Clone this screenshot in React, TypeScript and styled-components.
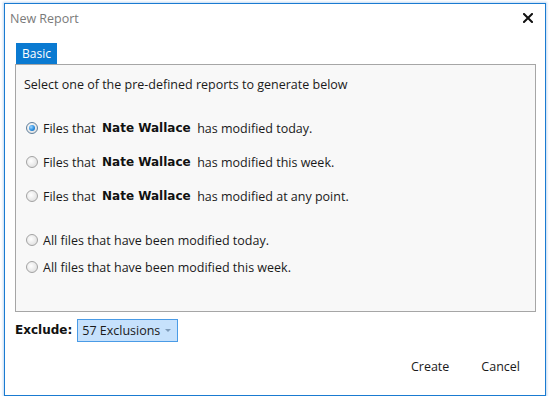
import React from "react";
import styled, { createGlobalStyle } from "styled-components";

const Global = createGlobalStyle`
  html, body { margin: 0; padding: 0; background: #ffffff; }
  body { font-family: "Open Sans", "Noto Sans", sans-serif; }
`;

const Window = styled.div`
  box-sizing: border-box;
  margin: 3px 0 0 4px;
  width: 542px;
  height: 393px;
  border: 1px solid #1a7bd1;
  box-shadow: 0 0 2px 1px rgba(80, 150, 220, 0.35);
  background: #ffffff;
  display: flex;
  flex-direction: column;
`;

const TitleBar = styled.div`
  box-sizing: border-box;
  height: 34px;
  display: flex;
  align-items: center;
  justify-content: space-between;
  padding: 0 10px 6px 5px;
  flex-shrink: 0;
`;

const Title = styled.span`
  font-size: 12.5px;
  color: #7a7a7a;
`;

const Close = styled.button`
  border: none;
  background: none;
  padding: 0;
  width: 14px;
  height: 14px;
  display: flex;
  align-items: center;
  justify-content: center;
  cursor: pointer;
`;

const Body = styled.div`
  padding: 5px 9px 0 10px;
  display: flex;
  flex-direction: column;
`;

const TabStrip = styled.div`
  display: flex;
  padding-left: 1px;
`;

const Tab = styled.div`
  background: #0a7ad1;
  color: #ffffff;
  font-size: 12px;
  height: 21px;
  padding: 0 6px;
  display: flex;
  align-items: center;
`;

const Panel = styled.div`
  box-sizing: border-box;
  height: 248px;
  border: 1px solid #a6a6a6;
  background: #f8f8f8;
  padding: 9px 8px 0 8px;
  display: flex;
  flex-direction: column;
`;

const Intro = styled.div`
  font-size: 12.5px;
  color: #1a1a1a;
  height: 20px;
  display: flex;
  align-items: center;
  margin-bottom: 24px;
`;

const Row = styled.label<{ $gap: number }>`
  display: flex;
  align-items: center;
  height: 20px;
  margin-bottom: ${(p) => p.$gap}px;
  font-size: 12.5px;
  color: #1a1a1a;
  white-space: pre;
  cursor: default;
`;

const RadioDot = styled.span<{ $on?: boolean }>`
  box-sizing: border-box;
  width: 12px;
  height: 12px;
  border-radius: 50%;
  margin: 0 5px 0 2px;
  border: 1px solid ${(p) => (p.$on ? "#5f7f9c" : "#a3a3a3")};
  background: radial-gradient(circle at 40% 40%, #ffffff 0%, #e4e4e4 70%, #d0d0d0 100%);
  display: flex;
  align-items: center;
  justify-content: center;
  &::after {
    content: "";
    display: ${(p) => (p.$on ? "block" : "none")};
    width: 6px;
    height: 6px;
    border-radius: 50%;
    background: radial-gradient(circle at 35% 35%, #9fd6ff 0%, #2a8ee0 55%, #0f5ea8 100%);
  }
`;

const Name = styled.b`
  font-family: "DejaVu Sans", sans-serif;
  font-size: 12px;
  font-weight: bold;
  color: #111;
`;

const ExcludeRow = styled.div`
  display: flex;
  align-items: center;
  margin-top: 6px;
  height: 24px;
`;

const ExcludeLabel = styled.span`
  font-family: "DejaVu Sans", sans-serif;
  font-weight: bold;
  font-size: 12px;
  color: #111;
  margin-right: 5px;
`;

const Dropdown = styled.button`
  box-sizing: border-box;
  height: 23px;
  width: 101px;
  border: 1px solid #4a9be6;
  background: #c6e1fc;
  font-family: "Open Sans", "Noto Sans", sans-serif;
  font-size: 12.5px;
  color: #1a1a1a;
  display: flex;
  align-items: center;
  gap: 5px;
  padding: 0 4px;
`;

const Caret = styled.span`
  width: 0;
  height: 0;
  border-left: 3px solid transparent;
  border-right: 3px solid transparent;
  border-top: 3px solid #7d9ab8;
`;

const Footer = styled.div`
  display: flex;
  justify-content: flex-end;
  align-items: center;
  margin-top: 13px;
  padding-right: 16px;
`;

const FooterButton = styled.button`
  border: none;
  background: none;
  font-family: "Open Sans", "Noto Sans", sans-serif;
  font-size: 12.5px;
  color: #1a1a1a;
  padding: 3px 0;
  margin-left: 32px;
  cursor: pointer;
`;

const rows = [
  { on: true, name: true, tail: "has modified today.", gap: 14 },
  { on: false, name: true, tail: "has modified this week.", gap: 14 },
  { on: false, name: true, tail: "has modified at any point.", gap: 24 },
  { on: false, name: false, tail: "All files that have been modified today.", gap: 7 },
  { on: false, name: false, tail: "All files that have been modified this week.", gap: 0 },
];

export default function App() {
  return (
    <>
      <Global />
      <Window>
        <TitleBar>
          <Title>New Report</Title>
          <Close aria-label="Close">
            <svg width="10" height="10" viewBox="0 0 10 10">
              <path d="M1 1 L9 9 M9 1 L1 9" stroke="#111" strokeWidth="2" strokeLinecap="square" />
            </svg>
          </Close>
        </TitleBar>
        <Body>
          <TabStrip>
            <Tab>Basic</Tab>
          </TabStrip>
          <Panel>
            <Intro>Select one of the pre-defined reports to generate below</Intro>
            {rows.map((r, i) => (
              <Row key={i} $gap={r.gap}>
                <RadioDot $on={r.on} />
                {r.name ? (
                  <>
                    {"Files that  "}
                    <Name>Nate Wallace</Name>
                    {"  " + r.tail}
                  </>
                ) : (
                  r.tail
                )}
              </Row>
            ))}
          </Panel>
          <ExcludeRow>
            <ExcludeLabel>Exclude:</ExcludeLabel>
            <Dropdown>
              57 Exclusions
              <Caret />
            </Dropdown>
          </ExcludeRow>
          <Footer>
            <FooterButton>Create</FooterButton>
            <FooterButton>Cancel</FooterButton>
          </Footer>
        </Body>
      </Window>
    </>
  );
}
